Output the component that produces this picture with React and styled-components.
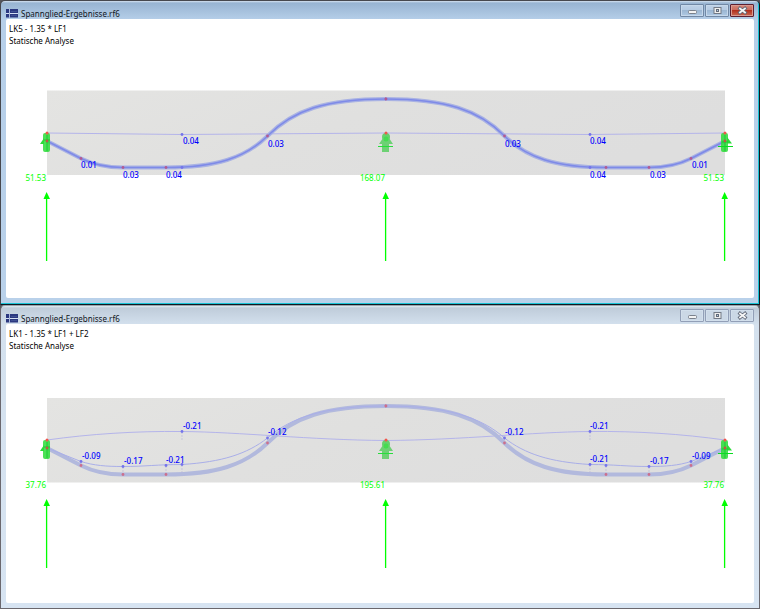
import React from 'react';
import styled, { createGlobalStyle } from 'styled-components';

const GlobalStyle = createGlobalStyle`
  * { box-sizing: border-box; }
  body {
    margin: 0;
    background: #56565c;
    font-family: 'Noto Sans', 'Open Sans', sans-serif;
  }
`;

const Workspace = styled.main`
  display: flex;
  flex-direction: column;
`;

const Window = styled.section`
  padding: 0 5px 5px;
  border: 1px solid ${(p) => (p.$active ? '#47484e' : '#6b686e')};
  border-top-color: ${(p) => (p.$active ? '#47484e' : '#9aa3ad')};
  border-radius: 5px 5px 0 0;
  background: ${(p) =>
    p.$active
      ? 'linear-gradient(#d5e2f0 0, #98b4d2 2px, #b6cfe9 19px, #b9d1ea 100%)'
      : 'linear-gradient(#e3ebf2 0, #bfccda 2px, #d4e1ee 19px, #d7e4f2 100%)'};
  ${(p) =>
    p.$active &&
    `
    border-right-color: #111820;
    border-bottom-color: #111820;
    padding-bottom: 6px;
    box-shadow: inset -1px -1px #18c3d5;
  `}
`;

const TitleBar = styled.header`
  display: flex;
  align-items: center;
  height: 18px;
`;

const Logo = styled.svg`
  width: 12px;
  height: 9px;
  margin: 6px 3px 0 0;
`;

const Title = styled.h1`
  flex: 1;
  margin: 8px 0 0;
  font-size: 8px;
  line-height: 12px;
  font-weight: 400;
  color: #10151c;
`;

const Controls = styled.div`
  display: flex;
  gap: 1px;
`;

const ControlButton = styled.button`
  display: grid;
  place-items: center;
  width: 24px;
  height: 13px;
  padding: 0;
  border: 1px solid ${(p) => (p.$danger ? '#5c1f31' : p.$active ? '#7188a5' : '#929fb7')};
  border-radius: 1px;
  box-shadow: inset 0 0 0 1px ${(p) => (p.$danger ? '#d99a91' : p.$active ? '#c6d8eb' : '#d2dfec')};
  background: ${(p) =>
    p.$danger
      ? 'linear-gradient(#d4877a 0, #ca695a 48%, #b2301f 50%, #c96a54 100%)'
      : p.$active
      ? 'linear-gradient(#bfd2e8 0, #b4cae2 48%, #9cb7d3 50%, #afc9e4 100%)'
      : '#cbd8e6'};

  svg {
    width: 11px;
    height: 9px;
  }
`;

const Canvas = styled.div`
  border-radius: 2px;
  overflow: hidden;
  background: #fff;
`;

const Caption = styled.div`
  padding: 4px 3px 0;
  font-size: 8px;
  line-height: 12px;
  color: #000;

  p {
    margin: 0;
  }
`;

const Diagram = styled.svg`
  display: block;
  width: 100%;
`;

const ValueText = styled.text`
  font-size: 8px;
  font-weight: ${(p) => (p.$reaction ? 400 : 500)};
  fill: ${(p) => (p.$reaction ? '#00ff00' : '#0000ff')};
`;

const MIDDLE = 386;
const SUPPORTS = [47, 386, 725];

const TENDON =
  'M47 141 L81 158.5 C93 164.5 105 167.5 123 167.5 H166 C216 167.5 245 158 267.5 136 C293 110 326 99 386 99';

const LOAD_CASES = [
  {
    name: 'LK5 - 1.35 * LF1',
    active: true,
    shift: 0,
    deflection: 'M47 133 L182 134.5 L386 133',
    deformed: TENDON,
    blue: [[182, 134.5], [182, 167.5]],
    ties: [],
    values: [
      ['0.04', 183, 144], ['0.01', 81, 168], ['0.03', 123, 178], ['0.04', 166, 178],
      ['0.03', 268, 147], ['0.03', 505, 147], ['0.04', 590, 144],
      ['0.04', 590, 178], ['0.03', 650, 178], ['0.01', 692, 168],
    ],
    reactions: ['51.53', '168.07', '51.53'],
  },
  {
    name: 'LK1 - 1.35 * LF1 + LF2',
    active: false,
    shift: 2,
    deflection: 'M47 133 C90 127 135 124 182 124.5 C240 125 310 133 386 133.5',
    deformed:
      'M47 141 L81 154.5 C94 158.5 106 159.5 123 159.5 C145 159.5 158 157.5 182 157.5 C222 155 247 147 267.5 131 C291 110 326 99 386 99',
    blue: [[81, 154.5], [123, 159.5], [166, 158.5], [182, 157.5], [182, 124.5], [267.5, 131]],
    ties: ['M81 155V158', 'M123 160V167', 'M166 159V167', 'M182 158V167', 'M182 125V134', 'M267.5 131V136'],
    values: [
      ['-0.21', 183, 122], ['-0.09', 82, 152], ['-0.17', 124, 157], ['-0.21', 166, 156],
      ['-0.12', 268, 128], ['-0.12', 505, 128], ['-0.21', 590, 122],
      ['-0.21', 590, 155], ['-0.17', 650, 157], ['-0.09', 692, 152],
    ],
    reactions: ['37.76', '195.61', '37.76'],
  },
];

function Support({ x, kind }) {
  return (
    <g transform={`translate(${x} 0)`} fill="#2bdc38">
      {kind === 'start' && (
        <>
          <rect x="-4" y="133" width="7" height="19" rx="2" opacity="0.85" />
          <path d="M-7 144 L-3 138 V144Z" />
          <path d="M-3 140H3M0 135V151" stroke="#18cd32" />
        </>
      )}
      {kind === 'middle' && (
        <g opacity="0.85">
          <circle cy="137" r="4" fill="#50cf59" />
          <path d="M-3 138H3L7 144H3V152H-4V144H-7Z" fill="#5acf62" />
          <circle cy="139" r="2.5" />
          <path d="M-8 146.500H7" stroke="#08dd20" />
        </g>
      )}
      {kind === 'end' && (
        <>
          <rect x="-4" y="133" width="7" height="19" rx="2" opacity="0.85" />
          <path d="M2 137L7 143.500H2Z" />
          <path d="M-7 146.500H8" stroke="#08dd20" />
          <path d="M-3 142H3M0 135V151" stroke="#18cd32" />
        </>
      )}
    </g>
  );
}

function HalfSpan({ data }) {
  return (
    <>
      <path d={data.deflection} stroke="#b4b4ea" fill="none" />
      <path d={TENDON} stroke={data.active ? '#a9b2e3' : '#b2b9dd'} strokeWidth="4" fill="none" />
      {data.ties.map((d) => (
        <path key={d} d={d} stroke="#b9b9d8" strokeWidth="0.700" strokeDasharray="2 1" />
      ))}
      <path
        d={data.deformed}
        stroke={data.active ? '#7e8ae8' : '#a9aee8'}
        strokeWidth={data.active ? 1.5 : 1}
        fill="none"
      />
      {data.blue.map(([x, y]) => (
        <circle key={`${x}-${y}`} cx={x} cy={y} r="1.400" fill="#7474ea" />
      ))}
      {[[81, 158.5], [123, 167.5], [166, 167.5], [267.5, 136], [386, 99]].map(([x, y]) => (
        <circle key={x} cx={x} cy={y} r="1.400" fill={data.active ? '#b35a92' : '#cc6f8c'} />
      ))}
    </>
  );
}

function BeamDiagram({ data, id }) {
  return (
    <Diagram viewBox="6 47 748 251" role="img" aria-label={`Spannglied ${data.name}`}>
      <defs>
        <linearGradient id={id} x2="1" y2="0.3">
          <stop stopColor="#e4e4e2" />
          <stop offset="0.5" stopColor="#e0e0df" />
          <stop offset="1" stopColor="#dedede" />
        </linearGradient>
      </defs>
      <g transform={`translate(0 ${data.shift})`}>
        <rect x="47" y={data.active ? 90.5 : 91} width="678" height="84.500" fill={`url(#${id})`} />
        <HalfSpan data={data} />
        <g transform={`translate(${MIDDLE * 2} 0) scale(-1 1)`}>
          <HalfSpan data={data} />
        </g>
        {SUPPORTS.map((x, i) => (
          <g key={x}>
            <Support x={x} kind={['start', 'middle', 'end'][i]} />
            <circle cx={x} cy="133" r="1.500" fill="#f0564b" />
            <path d={`M${x - 0.4} 198V261`} stroke="#00ff00" strokeWidth="1.3" />
            <path d={`M${x - 0.4} 192L${x + 3} 199H${x - 3.5}Z`} fill="#00ff00" />
            <ValueText $reaction x={x - 1} y="181" textAnchor="end">
              {data.reactions[i]}
            </ValueText>
          </g>
        ))}
        <circle cx="47" cy="141" r="1.400" fill="#bb5b45" />
        <circle cx="725" cy="141" r="1.400" fill="#bb5b45" />
        {data.values.map(([value, x, y]) => (
          <ValueText key={`${x}-${y}`} x={x} y={y}>
            {value}
          </ValueText>
        ))}
      </g>
    </Diagram>
  );
}

function AppLogo() {
  return (
    <Logo viewBox="0 0 12 9" aria-hidden="true">
      <path d="M0 0H12V8.500H0Z" fill="#2b3880" />
      <path d="M0 4.500H12" stroke="#d3def2" />
      <path d="M3.500 0V9" stroke="#a9b8dc" />
      <path d="M5 2.500H11M5 6.500H11" stroke="#4d5f9d" strokeWidth="0.600" />
    </Logo>
  );
}

function WindowControls({ active }) {
  return (
    <Controls>
      <ControlButton $active={active} aria-label="Minimieren">
        <svg viewBox="0 0 11 9">
          <rect x="1.500" y="4.500" width="8" height="3" rx="1" fill="#f3f3f3" stroke="#7a818c" />
        </svg>
      </ControlButton>
      <ControlButton $active={active} aria-label="Maximieren">
        <svg viewBox="0 0 11 9">
          <rect x="2" y="1.500" width="7" height="6" fill="#eee" stroke="#737a86" />
          <rect x="4.500" y="3.500" width="2" height="2" fill="#b9cce2" stroke="#626b79" />
        </svg>
      </ControlButton>
      <ControlButton $active={active} $danger={active} aria-label="Schließen">
        <svg viewBox="0 0 11 9">
          <path d="M3 2.500L8 6.500M8 2.500L3 6.500" stroke="#5f6777" strokeWidth="3.500" strokeLinecap="square" />
          <path d="M3 2.500L8 6.500M8 2.500L3 6.500" stroke="#f5f5f5" strokeWidth="1.800" strokeLinecap="square" />
        </svg>
      </ControlButton>
    </Controls>
  );
}

function ResultWindow({ data }) {
  return (
    <Window $active={data.active}>
      <TitleBar>
        <AppLogo />
        <Title>Spannglied-Ergebnisse.rf6</Title>
        <WindowControls active={data.active} />
      </TitleBar>
      <Canvas>
        <Caption>
          <p>{data.name}</p>
          <p>Statische Analyse</p>
        </Caption>
        <BeamDiagram data={data} id={data.active ? 'concrete-a' : 'concrete-b'} />
      </Canvas>
    </Window>
  );
}

export default function App() {
  return (
    <>
      <GlobalStyle />
      <Workspace>
        {LOAD_CASES.map((data) => (
          <ResultWindow key={data.name} data={data} />
        ))}
      </Workspace>
    </>
  );
}
